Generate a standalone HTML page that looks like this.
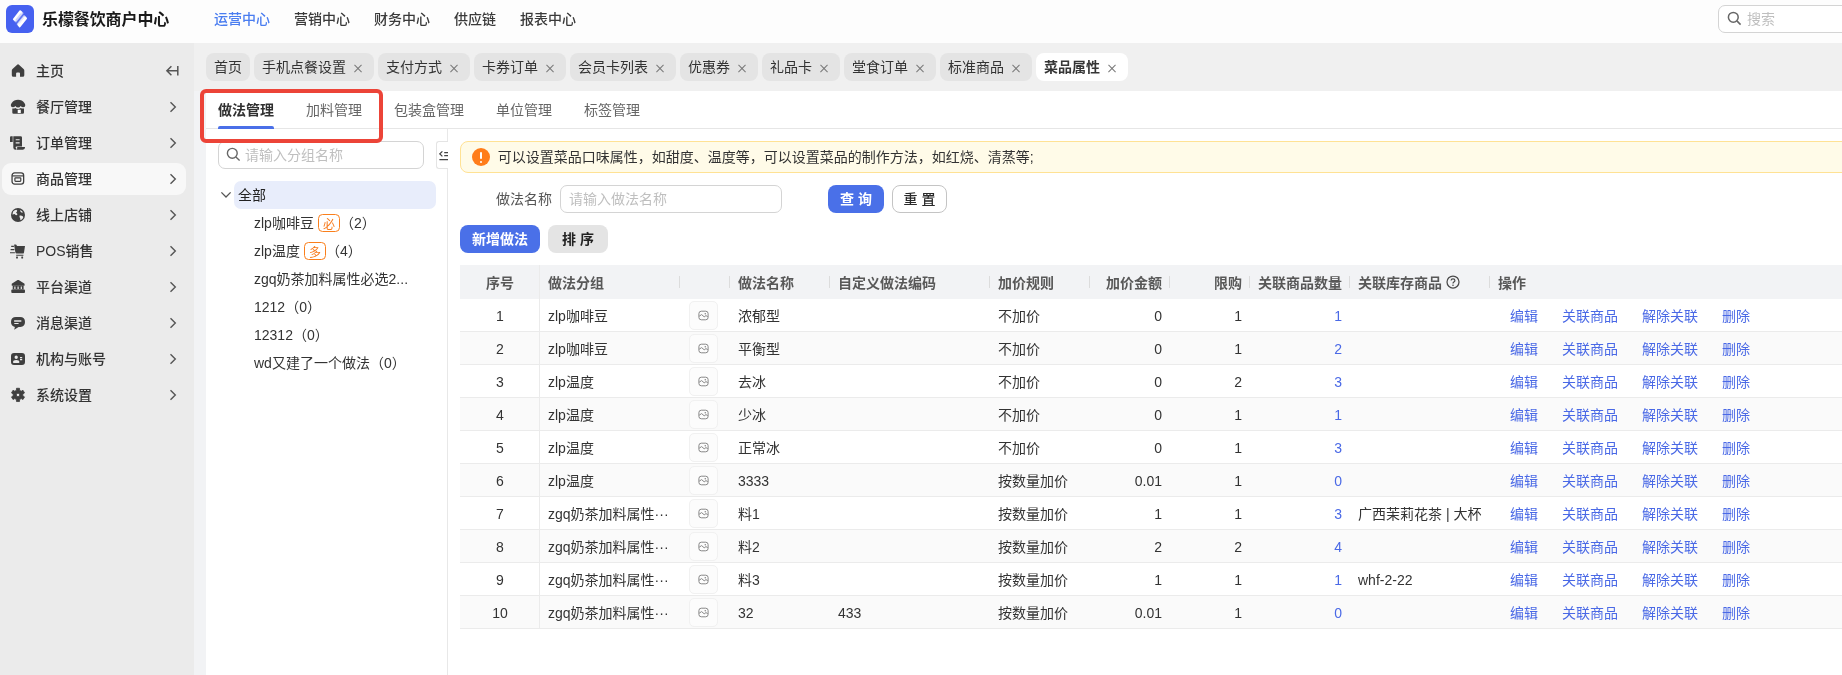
<!DOCTYPE html>
<html lang="zh-CN">
<head>
<meta charset="utf-8">
<title>乐檬餐饮商户中心</title>
<style>
*{box-sizing:border-box;margin:0;padding:0}
html,body{width:1842px;height:675px;overflow:hidden}
body{position:relative;background:#f0f0f0;color:#333;font-family:"Liberation Sans","Noto Sans CJK SC",sans-serif;font-size:14px;line-height:20px}
#root{position:absolute;left:0;top:0;width:1842px;height:675px;overflow:hidden;will-change:transform}
.abs{position:absolute}
/* header */
#hdr{position:absolute;left:0;top:0;width:1842px;height:43px;background:#fdfdfd}
#logo{position:absolute;left:6px;top:5px;width:28px;height:28px;border-radius:6px;background:#4661f0}
#brand{position:absolute;left:42px;top:8px;font-size:16px;line-height:24px;font-weight:700;color:#1a1a1a;letter-spacing:-0.1px;white-space:nowrap}
.nav{position:absolute;top:8.5px;line-height:20px;font-size:14px;font-weight:500;color:#3a3a3a;white-space:nowrap}
.nav.on{color:#4a7df0}
#gs{position:absolute;left:1718px;top:5px;width:140px;height:28px;border:1px solid #d4d4d4;border-radius:7px;background:#fff}
#gs span{position:absolute;left:28px;top:2.5px;color:#bfbfbf}
/* sidebar */
#side{position:absolute;left:0;top:43px;width:194px;height:632px;background:#ebebeb}
.mi{position:absolute;left:2px;width:184px;height:32px;border-radius:9px}
.mi.on{background:#f8f8f8}
.mi b{position:absolute;left:34px;top:6px;font-weight:500;color:#333;white-space:nowrap}
.mi svg.ic{position:absolute;left:8px;top:8px;width:16px;height:16px}
.mi svg.ar{position:absolute;left:167px;top:10px;width:8px;height:12px}
/* page tabs */
.pt{position:absolute;top:53px;height:28px;border-radius:8px;background:#e4e4e4;color:#333;padding:4px 0 0 8px;white-space:nowrap}
.pt.on{background:#fff;font-weight:700;color:#363636}
.pt i{position:absolute;right:11.8px;top:10.7px;width:9px;height:9px}
.pt i:before,.pt i:after{content:"";position:absolute;left:-0.5px;top:4px;width:10px;height:1.1px;background:#777;transform:rotate(45deg)}
.pt i:after{transform:rotate(-45deg)}
/* panel */
#panel{position:absolute;left:206px;top:91px;width:1640px;height:590px;background:#fff}
.st{position:absolute;top:100px;line-height:20px;color:#666;white-space:nowrap}
.st.on{color:#303030;font-weight:700}

#tline{position:absolute;left:206px;top:128px;width:1640px;height:1px;background:#e6e6e6}
#tink{position:absolute;left:218px;top:126px;width:56px;height:3px;border-radius:2px 2px 0 0;background:#4a6fe8}
#vline{position:absolute;left:447px;top:129px;width:1px;height:560px;background:#e8e8e8}
#ts{position:absolute;left:218px;top:141px;width:206px;height:28px;border:1px solid #d4d4d4;border-radius:7px;background:#fff}
#ts span{position:absolute;left:26px;top:3px;color:#bfbfbf;white-space:nowrap}
#fold{position:absolute;left:436px;top:141px;width:12px;height:28px;border:1px solid #e4e4e4;border-right:0;border-radius:3px 0 0 3px;background:#fff;overflow:hidden}
#all{position:absolute;left:234px;top:181px;width:202px;height:28px;border-radius:7px;background:#e8edfb}
#all span{position:absolute;left:4px;top:4px;color:#222}
.tn{position:absolute;left:254px;line-height:20px;white-space:nowrap;color:#333}
.tg s{position:relative;top:2.4px;text-decoration:none}
.tg{display:inline-block;width:22px;height:18px;line-height:16px;border:1px solid #fa7f1c;border-radius:4.5px;color:#f77a1c;font-size:12px;text-align:center;vertical-align:1px;margin:0 0 0 4px;background:#fff}
#alert{position:absolute;left:460px;top:141px;width:1400px;height:32px;border:1px solid #ffe294;border-radius:8px;background:#fffbe8}
#alert span{position:absolute;left:36.8px;top:4.5px;color:#333;white-space:nowrap}
#alert em{position:absolute;left:11px;top:6px;width:18px;height:18px;border-radius:9px;background:#ff7d1a}
#alert em:before{content:"";position:absolute;left:8px;top:4px;width:2px;height:7px;background:#fff;border-radius:1px}
#alert em:after{content:"";position:absolute;left:8px;top:12.5px;width:2px;height:2px;background:#fff;border-radius:1px}
#flab{position:absolute;left:496px;top:189px;color:#555;white-space:nowrap}
#finp{position:absolute;left:560px;top:185px;width:222px;height:28px;border:1px solid #d4d4d4;border-radius:7px;background:#fff}
#finp span{position:absolute;left:8px;top:2.5px;color:#bfbfbf;white-space:nowrap}
.btn{position:absolute;height:28px;border-radius:8px;line-height:28px;text-align:center;font-weight:700;white-space:nowrap}
.btn.p{background:#4a70e8;color:#fff}
.btn.g{background:#e4e4e4;color:#222}
.btn.o{background:#fff;border:1px solid #c4c4c4;color:#2a2a2a;line-height:26px;font-weight:500}

#th{position:absolute;left:460px;top:265px;width:1400px;height:34px;background:#f2f3f5}
#th b{position:absolute;top:7.6px;font-weight:700;color:#585858;white-space:nowrap}
#th i{position:absolute;top:11px;width:1px;height:12px;background:#dcdcdc}
#c1{position:absolute;left:539px;top:265px;width:1px;height:364px;background:#ebebeb}
.tr{position:absolute;left:460px;width:1400px;height:33px;border-bottom:1px solid #ebebeb;background:#fff}
.tr.e{background:#fafafa}
.tr span,.tr a{position:absolute;top:6.5px;white-space:nowrap;color:#333}
.tr a{color:#4a69e6}
.tr .r{text-align:right}
.tr u{position:absolute;left:228.5px;top:2px;width:29.5px;height:29px;border:1px solid #f1f1f1;border-radius:5px;background:#fcfcfc}
</style>
</head>
<body>
<div id="root">
<div id="hdr">
  <div id="logo"><svg width="28" height="28" viewBox="0 0 28 28"><defs><linearGradient id="lg1" gradientUnits="userSpaceOnUse" x1="13.6" y1="5.2" x2="17.8" y2="8.7"><stop offset="0.4" stop-color="#fff"/><stop offset="1" stop-color="#fff" stop-opacity="0.25"/></linearGradient><linearGradient id="lg2" gradientUnits="userSpaceOnUse" x1="17" y1="9.9" x2="21.2" y2="13.4"><stop offset="0" stop-color="#fff" stop-opacity="0.25"/><stop offset="0.6" stop-color="#fff"/></linearGradient></defs><path d="M14.2 6.1 L16.8 8.5 L10.2 16.8 L7.8 14.2Z" fill="url(#lg1)" stroke="url(#lg1)" stroke-width="1.8" stroke-linejoin="round"/><path d="M17.9 10.9 L20.1 13.4 L13.7 21.5 L11.5 19Z" fill="url(#lg2)" stroke="url(#lg2)" stroke-width="1.8" stroke-linejoin="round"/></svg></div>
  <div id="brand">乐檬餐饮商户中心</div>
  <div class="nav on" style="left:214px">运营中心</div>
  <div class="nav" style="left:294px">营销中心</div>
  <div class="nav" style="left:374px">财务中心</div>
  <div class="nav" style="left:454px">供应链</div>
  <div class="nav" style="left:520px">报表中心</div>
  <div id="gs"><svg class="abs" style="left:8px;top:5px" width="15" height="15" viewBox="0 0 15 15"><circle cx="6.3" cy="6.3" r="4.9" fill="none" stroke="#666" stroke-width="1.5"/><path d="M9.9 9.9 L13.6 13.6" stroke="#666" stroke-width="1.5"/></svg><span>搜索</span></div>
</div>
<div id="side">
  <div class="mi" style="top:12px"><svg class="ic" viewBox="0 0 16 16"><path d="M8.05 1.3 Q8.6 1.3 9.2 1.9 L13.6 5.9 Q14.3 6.5 14.3 7.5 V12.2 Q14.3 13.8 12.7 13.8 H10 V10.6 Q10 9.6 9 9.6 H7.1 Q6.1 9.6 6.1 10.6 V13.8 H3.4 Q1.8 13.8 1.8 12.2 V7.5 Q1.8 6.5 2.5 5.9 L6.9 1.9 Q7.5 1.3 8.05 1.3Z" fill="#3f3f3f"/></svg><b>主页</b><svg class="ar" style="left:163px;top:9px;width:14px;height:14px" viewBox="0 0 14 14"><path d="M1.8 6.8 H12.6 M6.4 2.3 L1.9 6.8 L6.4 11.3 M12.8 2 V11.6" fill="none" stroke="#555" stroke-width="1.5"/></svg></div>
  <div class="mi" style="top:48px"><svg class="ic" viewBox="0 0 16 16"><path d="M0.8 6.3 Q0.8 5.3 1.7 4.1 Q4 0.8 8.05 0.8 Q12.1 0.8 14.4 4.1 Q15.3 5.3 15.3 6.3 Q15.3 8.3 13.3 8.3 Q11.7 8.3 10.7 6.9 Q9.7 8.5 8.05 8.5 Q6.4 8.5 5.4 6.9 Q4.4 8.3 2.8 8.3 Q0.8 8.3 0.8 6.3Z" fill="#3f3f3f"/><path d="M2.3 9.5 Q3.9 9.9 5.3 8.9 Q6.5 10 8.05 10 Q9.6 10 10.8 8.9 Q12.2 9.9 14 9.5 V13.6 Q14 14.8 12.8 14.8 H3.5 Q2.3 14.8 2.3 13.6Z" fill="#3f3f3f"/><rect x="7.7" y="10.7" width="3.1" height="3.4" fill="#fff"/></svg><b>餐厅管理</b><svg class="ar" viewBox="0 0 8 12"><path d="M1.5 1.2 L6.3 6 L1.5 10.8" fill="none" stroke="#555" stroke-width="1.4"/></svg></div>
  <div class="mi" style="top:84px"><svg class="ic" viewBox="0 0 16 16"><path d="M1 1.2 H2.7 V6.9 H0 V2.2 Q0 1.2 1 1.2Z" fill="#3f3f3f"/><path d="M3.3 1.2 H10.6 Q12 1.2 12 2.6 V11.4 H6.6 Q5.6 11.4 5.6 12.6 Q5.6 13.4 6.4 13.4 V14.7 H5.6 Q3.3 14.7 3.3 12.4Z M5.7 4.2 V5.3 H9.6 V4.2Z M5.7 7.3 V8.4 H9.6 V7.3Z" fill="#3f3f3f" fill-rule="evenodd"/><path d="M7.2 12 H15 V12.6 Q15 14.7 12.9 14.7 H6.6 Q7.4 14 7.2 12Z" fill="#3f3f3f"/></svg><b>订单管理</b><svg class="ar" viewBox="0 0 8 12"><path d="M1.5 1.2 L6.3 6 L1.5 10.8" fill="none" stroke="#555" stroke-width="1.4"/></svg></div>
  <div class="mi on" style="top:120px"><svg class="ic" viewBox="0 0 16 16"><rect x="2.05" y="1.85" width="11.6" height="11.2" rx="2.6" fill="none" stroke="#3f3f3f" stroke-width="1.3"/><path d="M2.2 4.9 H13.5" stroke="#3f3f3f" stroke-width="1.2"/><rect x="4.9" y="6.9" width="5.9" height="3.4" rx="0.7" fill="none" stroke="#3f3f3f" stroke-width="1.2"/></svg><b>商品管理</b><svg class="ar" viewBox="0 0 8 12"><path d="M1.5 1.2 L6.3 6 L1.5 10.8" fill="none" stroke="#555" stroke-width="1.4"/></svg></div>
  <div class="mi" style="top:156px"><svg class="ic" viewBox="0 0 16 16"><circle cx="8" cy="8" r="7" fill="#3f3f3f"/><path d="M3.3 4.2 Q4.6 3 6.4 2.7 Q7.6 3.2 7 4.4 Q6 5 6.2 6 Q7.4 6.4 7.4 7.6 Q6.6 8.4 5.6 8 L4.6 7 Q3.4 7 2.6 7.8 Q2.4 5.8 3.3 4.2Z M9.6 8.6 Q11.2 8 12.4 9 Q13.4 9.8 13.2 10.8 Q12.2 12.6 10.6 13.2 Q10 12.2 10.2 11.2 Q9 10.4 9.6 8.6Z M10.2 2.9 Q12 3.6 13 5.2 Q12 5.8 11 5.2 Q10 4.2 10.2 2.9Z" fill="#ebebeb"/></svg><b>线上店铺</b><svg class="ar" viewBox="0 0 8 12"><path d="M1.5 1.2 L6.3 6 L1.5 10.8" fill="none" stroke="#555" stroke-width="1.4"/></svg></div>
  <div class="mi" style="top:192px"><svg class="ic" viewBox="0 0 16 16"><path d="M4.2 1.4 H5.6 Q6.5 1.4 6.7 2.3 L6.9 3 H15 L14 9.4 Q13.8 10.6 12.6 10.6 H6.6 Q5.6 10.6 5.4 9.6 L4.2 2.6Z" fill="#3f3f3f"/><path d="M1.2 3.4 H3.9 M0.6 6.6 H4.4 M0 9.8 H4.9 M6.2 12.3 H13.4" stroke="#3f3f3f" stroke-width="1.1" fill="none"/><rect x="6.1" y="13.6" width="1.8" height="1.8" rx="0.5" fill="#3f3f3f"/><rect x="11.3" y="13.6" width="1.8" height="1.8" rx="0.5" fill="#3f3f3f"/></svg><b>POS销售</b><svg class="ar" viewBox="0 0 8 12"><path d="M1.5 1.2 L6.3 6 L1.5 10.8" fill="none" stroke="#555" stroke-width="1.4"/></svg></div>
  <div class="mi" style="top:228px"><svg class="ic" viewBox="0 0 16 16"><path d="M7.6 1.1 Q8.15 0.7 8.7 1.1 L14.2 4.4 Q14.6 4.7 14.6 5.2 V6.2 Q14.6 6.8 14 6.8 H2.3 Q1.7 6.8 1.7 6.2 V5.2 Q1.7 4.7 2.1 4.4Z" fill="#3f3f3f"/><path d="M2.7 6.8 H13.6 V10.6 H2.7Z M4.3 7.4 V10 H5.5 V7.4Z M7.5 7.4 V10 H8.7 V7.4Z M10.7 7.4 V10 H11.9 V7.4Z" fill="#3f3f3f" fill-rule="evenodd"/><path d="M2.2 10.6 H14.1 Q15 10.6 15 11.5 V13.1 Q15 14 14.1 14 H2.2 Q1.3 14 1.3 13.1 V11.5 Q1.3 10.6 2.2 10.6Z" fill="#3f3f3f"/></svg><b>平台渠道</b><svg class="ar" viewBox="0 0 8 12"><path d="M1.5 1.2 L6.3 6 L1.5 10.8" fill="none" stroke="#555" stroke-width="1.4"/></svg></div>
  <div class="mi" style="top:264px"><svg class="ic" viewBox="0 0 16 16"><path d="M6 2 H10 Q15 2 15 7 Q15 11.4 10.4 12.1 H8.6 L4.6 14.6 Q4.2 14.8 4.3 14.3 L4.9 11.9 Q1 10.9 1 7 Q1 2 6 2Z M4.3 5.2 V6.8 H11.2 V5.2Z M4.3 7.9 V9 H8.6 V7.9Z" fill="#3f3f3f" fill-rule="evenodd"/><path d="M4.3 5.2 H11.2 V6.8 H4.3Z" fill="#bdbdbd"/></svg><b>消息渠道</b><svg class="ar" viewBox="0 0 8 12"><path d="M1.5 1.2 L6.3 6 L1.5 10.8" fill="none" stroke="#555" stroke-width="1.4"/></svg></div>
  <div class="mi" style="top:300px"><svg class="ic" viewBox="0 0 16 16"><path d="M4 2 H12 Q15 2 15 5 V11 Q15 14 12 14 H4 Q1 14 1 11 V5 Q1 2 4 2Z M6.2 4.6 A1.65 1.65 0 1 0 6.2 7.9 A1.65 1.65 0 1 0 6.2 4.6Z M3 11.2 Q3 12 3.8 12 H8.6 Q9.4 12 9.4 11.2 Q9.4 9 6.2 9 Q3 9 3 11.2Z M10 6 V7.2 H12.2 V6Z M10 8 V9.2 H12.2 V8Z" fill="#3f3f3f" fill-rule="evenodd"/></svg><b>机构与账号</b><svg class="ar" viewBox="0 0 8 12"><path d="M1.5 1.2 L6.3 6 L1.5 10.8" fill="none" stroke="#555" stroke-width="1.4"/></svg></div>
  <div class="mi" style="top:336px"><svg class="ic" viewBox="0 0 16 16"><path d="M6.40 3.27 L6.47 1.27 L9.53 1.27 L9.60 3.27 L11.21 4.20 L12.97 3.26 L14.50 5.91 L12.81 6.97 L12.81 8.83 L14.50 9.89 L12.97 12.54 L11.21 11.60 L9.60 12.53 L9.53 14.53 L6.47 14.53 L6.40 12.53 L4.79 11.60 L3.03 12.54 L1.50 9.89 L3.19 8.83 L3.19 6.97 L1.50 5.91 L3.03 3.26 L4.79 4.20Z M8 6.2 A1.7 1.7 0 1 0 8 9.6 A1.7 1.7 0 1 0 8 6.2Z" fill="#3f3f3f" fill-rule="evenodd" stroke="#3f3f3f" stroke-width="0.8" stroke-linejoin="round"/></svg><b>系统设置</b><svg class="ar" viewBox="0 0 8 12"><path d="M1.5 1.2 L6.3 6 L1.5 10.8" fill="none" stroke="#555" stroke-width="1.4"/></svg></div>
</div>
<div class="pt" style="left:206px;width:44px">首页</div>
<div class="pt" style="left:254px;width:120px">手机点餐设置<i></i></div>
<div class="pt" style="left:378px;width:92px">支付方式<i></i></div>
<div class="pt" style="left:474px;width:92px">卡券订单<i></i></div>
<div class="pt" style="left:570px;width:106px">会员卡列表<i></i></div>
<div class="pt" style="left:680px;width:78px">优惠券<i></i></div>
<div class="pt" style="left:762px;width:78px">礼品卡<i></i></div>
<div class="pt" style="left:844px;width:92px">堂食订单<i></i></div>
<div class="pt" style="left:940px;width:92px">标准商品<i></i></div>
<div class="pt on" style="left:1036px;width:92px">菜品属性<i></i></div>
<div class="abs" style="left:194px;top:91px;width:12px;height:584px;background:#f2f3f5"></div>
<div id="panel"></div>
<div class="st on" style="left:218px">做法管理</div>
<div class="st" style="left:306px">加料管理</div>
<div class="st" style="left:394px">包装盒管理</div>
<div class="st" style="left:496px">单位管理</div>
<div class="st" style="left:584px">标签管理</div>
<div id="tline"></div><div id="tink"></div><div id="vline"></div>
<div id="ts"><svg class="abs" style="left:7px;top:4.5px" width="15" height="15" viewBox="0 0 15 15"><circle cx="6.3" cy="6.3" r="4.9" fill="none" stroke="#666" stroke-width="1.4"/><path d="M9.9 9.9 L13.6 13.6" stroke="#666" stroke-width="1.4"/></svg><span>请输入分组名称</span></div>
<div id="fold"><svg class="abs" style="left:2px;top:8px" width="14" height="12" viewBox="0 0 14 12"><path d="M3.4 1.4 L0.8 3.9 L3.4 6.4 M5.2 2.6 H14 M5.2 5.6 H14 M0.4 9.7 H14" fill="none" stroke="#444" stroke-width="1.3"/></svg></div>
<svg class="abs" style="left:220px;top:189px" width="12" height="12" viewBox="0 0 12 12"><path d="M1.4 3.4 L6 8 L10.6 3.4" fill="none" stroke="#555" stroke-width="1.3"/></svg>
<div id="all"><span>全部</span></div>
<div class="tn" style="top:213px">zlp咖啡豆<span class="tg"><s>必</s></span>（2）</div>
<div class="tn" style="top:241px">zlp温度<span class="tg"><s>多</s></span>（4）</div>
<div class="tn" style="top:269px">zgq奶茶加料属性必选2...</div>
<div class="tn" style="top:297px">1212（0）</div>
<div class="tn" style="top:325px">12312（0）</div>
<div class="tn" style="top:353px">wd又建了一个做法（0）</div>
<div id="alert"><em></em><span>可以设置菜品口味属性，如甜度、温度等，可以设置菜品的制作方法，如红烧、清蒸等;</span></div>
<div id="flab">做法名称</div>
<div id="finp"><span>请输入做法名称</span></div>
<div class="btn p" style="left:828px;top:185px;width:56px">查 询</div>
<div class="btn o" style="left:892px;top:185px;width:55px">重 置</div>
<div class="btn p" style="left:460px;top:225px;width:80px">新增做法</div>
<div class="btn g" style="left:548px;top:225px;width:60px">排 序</div>
<div id="th"><b style="left:26px">序号</b><b style="left:88px">做法分组</b><b style="left:278px">做法名称</b><b style="left:378px">自定义做法编码</b><b style="left:538px">加价规则</b><b style="left:646px">加价金额</b><b style="left:754px">限购</b><b style="left:798px">关联商品数量</b><b style="left:898px">关联库存商品</b><svg class="abs" style="left:986px;top:10px" width="14" height="14" viewBox="0 0 14 14"><circle cx="7" cy="7" r="6" fill="none" stroke="#4a4a4a" stroke-width="1.25"/><path d="M5.1 5.6 Q5.1 3.8 7 3.8 Q8.9 3.8 8.9 5.4 Q8.9 6.4 7.9 6.9 Q7 7.4 7 8.4" fill="none" stroke="#4a4a4a" stroke-width="1.2"/><circle cx="7" cy="10.2" r="0.8" fill="#4a4a4a"/></svg><b style="left:1038px">操作</b><i style="left:219px"></i><i style="left:269px"></i><i style="left:369px"></i><i style="left:529px"></i><i style="left:629px"></i><i style="left:709px"></i><i style="left:789px"></i><i style="left:889px"></i><i style="left:1029px"></i></div>
<div class="tr" style="top:299px"><span style="left:0;width:80px;text-align:center">1</span><span style="left:88px">zlp咖啡豆</span><u><svg class="abs" style="left:8px;top:8px" width="11" height="11" viewBox="0 0 11 11"><rect x="0.9" y="1.2" width="9.2" height="8.6" rx="2.4" fill="none" stroke="#888" stroke-width="1"/><path d="M1.2 6.2 L3.6 4.6 L6.2 6.8 L8 5.6 L9.8 6.8" fill="none" stroke="#888" stroke-width="1"/><circle cx="7.3" cy="3.8" r="0.8" fill="#888"/></svg></u><span style="left:278px">浓郁型</span><span style="left:538px">不加价</span><span class="r" style="left:630px;width:72px">0</span><span class="r" style="left:710px;width:72px">1</span><a class="r" style="left:790px;width:92px">1</a><a style="left:1050px">编辑</a><a style="left:1102px">关联商品</a><a style="left:1182px">解除关联</a><a style="left:1262px">删除</a></div>
<div class="tr e" style="top:332px"><span style="left:0;width:80px;text-align:center">2</span><span style="left:88px">zlp咖啡豆</span><u><svg class="abs" style="left:8px;top:8px" width="11" height="11" viewBox="0 0 11 11"><rect x="0.9" y="1.2" width="9.2" height="8.6" rx="2.4" fill="none" stroke="#888" stroke-width="1"/><path d="M1.2 6.2 L3.6 4.6 L6.2 6.8 L8 5.6 L9.8 6.8" fill="none" stroke="#888" stroke-width="1"/><circle cx="7.3" cy="3.8" r="0.8" fill="#888"/></svg></u><span style="left:278px">平衡型</span><span style="left:538px">不加价</span><span class="r" style="left:630px;width:72px">0</span><span class="r" style="left:710px;width:72px">1</span><a class="r" style="left:790px;width:92px">2</a><a style="left:1050px">编辑</a><a style="left:1102px">关联商品</a><a style="left:1182px">解除关联</a><a style="left:1262px">删除</a></div>
<div class="tr" style="top:365px"><span style="left:0;width:80px;text-align:center">3</span><span style="left:88px">zlp温度</span><u><svg class="abs" style="left:8px;top:8px" width="11" height="11" viewBox="0 0 11 11"><rect x="0.9" y="1.2" width="9.2" height="8.6" rx="2.4" fill="none" stroke="#888" stroke-width="1"/><path d="M1.2 6.2 L3.6 4.6 L6.2 6.8 L8 5.6 L9.8 6.8" fill="none" stroke="#888" stroke-width="1"/><circle cx="7.3" cy="3.8" r="0.8" fill="#888"/></svg></u><span style="left:278px">去冰</span><span style="left:538px">不加价</span><span class="r" style="left:630px;width:72px">0</span><span class="r" style="left:710px;width:72px">2</span><a class="r" style="left:790px;width:92px">3</a><a style="left:1050px">编辑</a><a style="left:1102px">关联商品</a><a style="left:1182px">解除关联</a><a style="left:1262px">删除</a></div>
<div class="tr e" style="top:398px"><span style="left:0;width:80px;text-align:center">4</span><span style="left:88px">zlp温度</span><u><svg class="abs" style="left:8px;top:8px" width="11" height="11" viewBox="0 0 11 11"><rect x="0.9" y="1.2" width="9.2" height="8.6" rx="2.4" fill="none" stroke="#888" stroke-width="1"/><path d="M1.2 6.2 L3.6 4.6 L6.2 6.8 L8 5.6 L9.8 6.8" fill="none" stroke="#888" stroke-width="1"/><circle cx="7.3" cy="3.8" r="0.8" fill="#888"/></svg></u><span style="left:278px">少冰</span><span style="left:538px">不加价</span><span class="r" style="left:630px;width:72px">0</span><span class="r" style="left:710px;width:72px">1</span><a class="r" style="left:790px;width:92px">1</a><a style="left:1050px">编辑</a><a style="left:1102px">关联商品</a><a style="left:1182px">解除关联</a><a style="left:1262px">删除</a></div>
<div class="tr" style="top:431px"><span style="left:0;width:80px;text-align:center">5</span><span style="left:88px">zlp温度</span><u><svg class="abs" style="left:8px;top:8px" width="11" height="11" viewBox="0 0 11 11"><rect x="0.9" y="1.2" width="9.2" height="8.6" rx="2.4" fill="none" stroke="#888" stroke-width="1"/><path d="M1.2 6.2 L3.6 4.6 L6.2 6.8 L8 5.6 L9.8 6.8" fill="none" stroke="#888" stroke-width="1"/><circle cx="7.3" cy="3.8" r="0.8" fill="#888"/></svg></u><span style="left:278px">正常冰</span><span style="left:538px">不加价</span><span class="r" style="left:630px;width:72px">0</span><span class="r" style="left:710px;width:72px">1</span><a class="r" style="left:790px;width:92px">3</a><a style="left:1050px">编辑</a><a style="left:1102px">关联商品</a><a style="left:1182px">解除关联</a><a style="left:1262px">删除</a></div>
<div class="tr e" style="top:464px"><span style="left:0;width:80px;text-align:center">6</span><span style="left:88px">zlp温度</span><u><svg class="abs" style="left:8px;top:8px" width="11" height="11" viewBox="0 0 11 11"><rect x="0.9" y="1.2" width="9.2" height="8.6" rx="2.4" fill="none" stroke="#888" stroke-width="1"/><path d="M1.2 6.2 L3.6 4.6 L6.2 6.8 L8 5.6 L9.8 6.8" fill="none" stroke="#888" stroke-width="1"/><circle cx="7.3" cy="3.8" r="0.8" fill="#888"/></svg></u><span style="left:278px">3333</span><span style="left:538px">按数量加价</span><span class="r" style="left:630px;width:72px">0.01</span><span class="r" style="left:710px;width:72px">1</span><a class="r" style="left:790px;width:92px">0</a><a style="left:1050px">编辑</a><a style="left:1102px">关联商品</a><a style="left:1182px">解除关联</a><a style="left:1262px">删除</a></div>
<div class="tr" style="top:497px"><span style="left:0;width:80px;text-align:center">7</span><span style="left:88px">zgq奶茶加料属性···</span><u><svg class="abs" style="left:8px;top:8px" width="11" height="11" viewBox="0 0 11 11"><rect x="0.9" y="1.2" width="9.2" height="8.6" rx="2.4" fill="none" stroke="#888" stroke-width="1"/><path d="M1.2 6.2 L3.6 4.6 L6.2 6.8 L8 5.6 L9.8 6.8" fill="none" stroke="#888" stroke-width="1"/><circle cx="7.3" cy="3.8" r="0.8" fill="#888"/></svg></u><span style="left:278px">料1</span><span style="left:538px">按数量加价</span><span class="r" style="left:630px;width:72px">1</span><span class="r" style="left:710px;width:72px">1</span><a class="r" style="left:790px;width:92px">3</a><span style="left:898px">广西茉莉花茶 | 大杯</span><a style="left:1050px">编辑</a><a style="left:1102px">关联商品</a><a style="left:1182px">解除关联</a><a style="left:1262px">删除</a></div>
<div class="tr e" style="top:530px"><span style="left:0;width:80px;text-align:center">8</span><span style="left:88px">zgq奶茶加料属性···</span><u><svg class="abs" style="left:8px;top:8px" width="11" height="11" viewBox="0 0 11 11"><rect x="0.9" y="1.2" width="9.2" height="8.6" rx="2.4" fill="none" stroke="#888" stroke-width="1"/><path d="M1.2 6.2 L3.6 4.6 L6.2 6.8 L8 5.6 L9.8 6.8" fill="none" stroke="#888" stroke-width="1"/><circle cx="7.3" cy="3.8" r="0.8" fill="#888"/></svg></u><span style="left:278px">料2</span><span style="left:538px">按数量加价</span><span class="r" style="left:630px;width:72px">2</span><span class="r" style="left:710px;width:72px">2</span><a class="r" style="left:790px;width:92px">4</a><a style="left:1050px">编辑</a><a style="left:1102px">关联商品</a><a style="left:1182px">解除关联</a><a style="left:1262px">删除</a></div>
<div class="tr" style="top:563px"><span style="left:0;width:80px;text-align:center">9</span><span style="left:88px">zgq奶茶加料属性···</span><u><svg class="abs" style="left:8px;top:8px" width="11" height="11" viewBox="0 0 11 11"><rect x="0.9" y="1.2" width="9.2" height="8.6" rx="2.4" fill="none" stroke="#888" stroke-width="1"/><path d="M1.2 6.2 L3.6 4.6 L6.2 6.8 L8 5.6 L9.8 6.8" fill="none" stroke="#888" stroke-width="1"/><circle cx="7.3" cy="3.8" r="0.8" fill="#888"/></svg></u><span style="left:278px">料3</span><span style="left:538px">按数量加价</span><span class="r" style="left:630px;width:72px">1</span><span class="r" style="left:710px;width:72px">1</span><a class="r" style="left:790px;width:92px">1</a><span style="left:898px">whf-2-22</span><a style="left:1050px">编辑</a><a style="left:1102px">关联商品</a><a style="left:1182px">解除关联</a><a style="left:1262px">删除</a></div>
<div class="tr e" style="top:596px"><span style="left:0;width:80px;text-align:center">10</span><span style="left:88px">zgq奶茶加料属性···</span><u><svg class="abs" style="left:8px;top:8px" width="11" height="11" viewBox="0 0 11 11"><rect x="0.9" y="1.2" width="9.2" height="8.6" rx="2.4" fill="none" stroke="#888" stroke-width="1"/><path d="M1.2 6.2 L3.6 4.6 L6.2 6.8 L8 5.6 L9.8 6.8" fill="none" stroke="#888" stroke-width="1"/><circle cx="7.3" cy="3.8" r="0.8" fill="#888"/></svg></u><span style="left:278px">32</span><span style="left:378px">433</span><span style="left:538px">按数量加价</span><span class="r" style="left:630px;width:72px">0.01</span><span class="r" style="left:710px;width:72px">1</span><a class="r" style="left:790px;width:92px">0</a><a style="left:1050px">编辑</a><a style="left:1102px">关联商品</a><a style="left:1182px">解除关联</a><a style="left:1262px">删除</a></div>
<div id="c1"></div>

<div class="abs" style="left:200px;top:89px;width:183px;height:54px;border:4.5px solid #ec4438;border-radius:6px"></div>

</div>
</body>
</html>
